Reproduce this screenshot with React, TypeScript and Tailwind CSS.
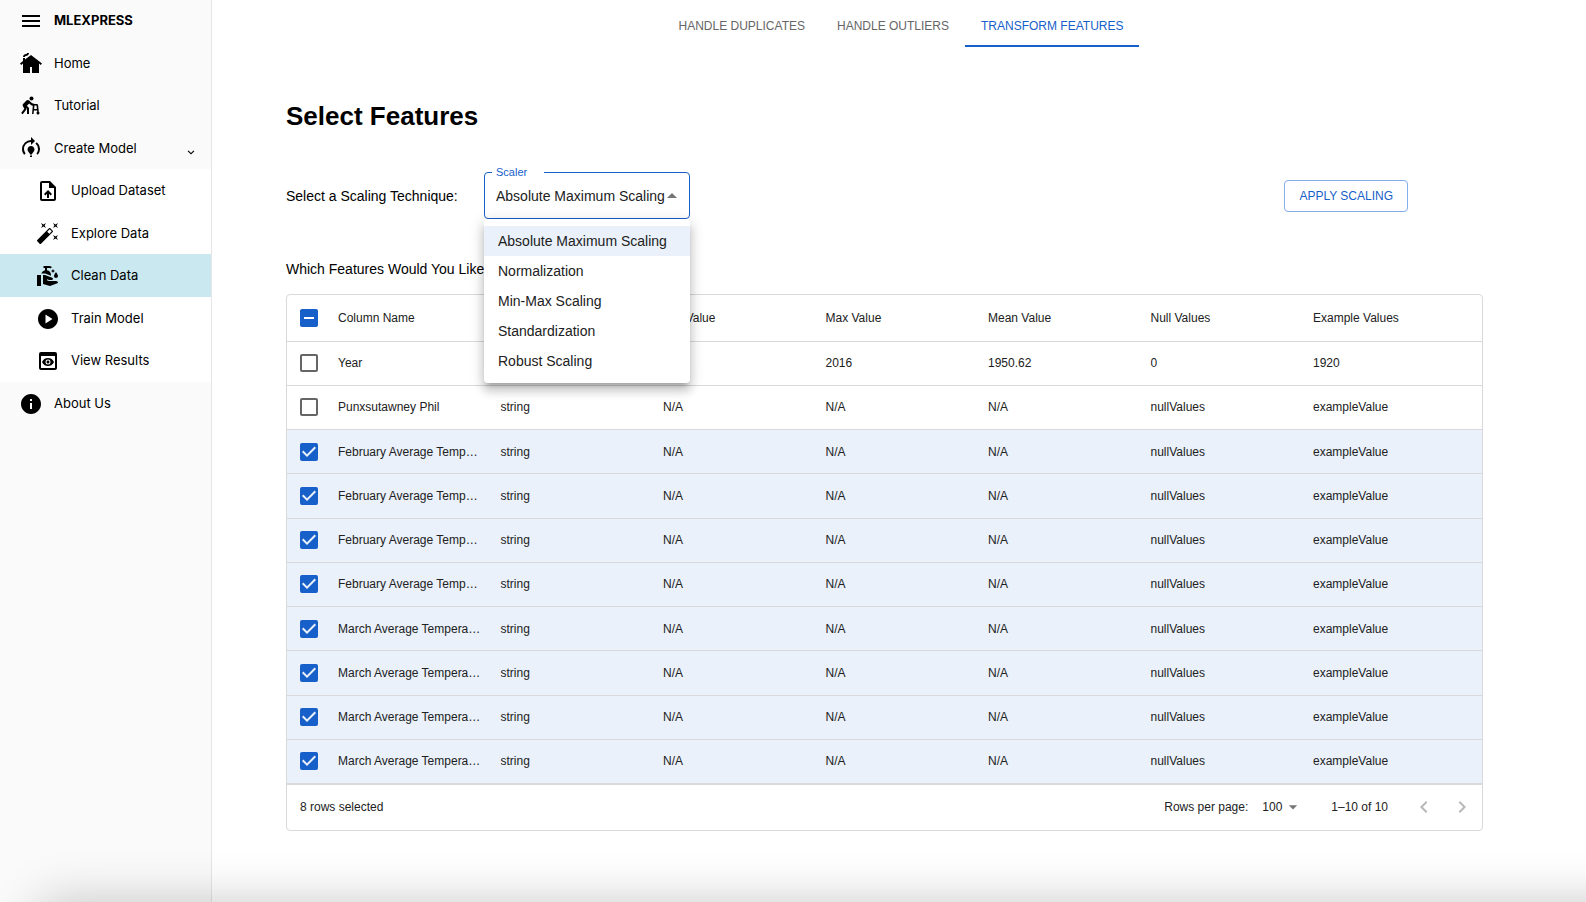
import { useState } from "react";
import type { ReactNode } from "react";
import type { IconType } from "react-icons";
import {
  MdArrowDropDown,
  MdArrowDropUp,
  MdAssistWalker,
  MdAutoFixHigh,
  MdCheckBox,
  MdCheckBoxOutlineBlank,
  MdCleanHands,
  MdCottage,
  MdIndeterminateCheckBox,
  MdInfo,
  MdKeyboardArrowLeft,
  MdKeyboardArrowRight,
  MdMenu,
  MdModelTraining,
  MdPlayCircle,
  MdPreview,
  MdUploadFile,
} from "react-icons/md";
import { BiChevronDown } from "react-icons/bi";

const SCALERS = [
  "Absolute Maximum Scaling",
  "Normalization",
  "Min-Max Scaling",
  "Standardization",
  "Robust Scaling",
];

const TABS = ["HANDLE DUPLICATES", "HANDLE OUTLIERS", "TRANSFORM FEATURES"];

const COLUMNS = [
  "Column Name",
  "Data Type",
  "Min Value",
  "Max Value",
  "Mean Value",
  "Null Values",
  "Example Values",
];

const textRow = (name: string) => [
  name,
  "string",
  "N/A",
  "N/A",
  "N/A",
  "nullValues",
  "exampleValue",
];

const ROWS = [
  ["Year", "int", "1887", "2016", "1950.62", "0", "1920"],
  textRow("Punxsutawney Phil"),
  textRow("February Average Temperature"),
  textRow("February Average Temperature"),
  textRow("February Average Temperature"),
  textRow("February Average Temperature"),
  textRow("March Average Temperature"),
  textRow("March Average Temperature"),
  textRow("March Average Temperature"),
  textRow("March Average Temperature"),
];

function NavItem({
  icon: Icon,
  nested,
  active,
  trailing,
  children,
}: {
  icon: IconType;
  nested?: boolean;
  active?: boolean;
  trailing?: ReactNode;
  children: ReactNode;
}) {
  return (
    <a
      href="#"
      aria-current={active ? "page" : undefined}
      className={`flex items-center gap-[11px] pt-px pr-[13px] ${nested ? "pl-9" : "pl-[19px]"} ${
        active ? "bg-[#c9e8ef]" : ""
      }`}
    >
      <Icon className="size-6 shrink-0" />
      <span className="grow">{children}</span>
      {trailing}
    </a>
  );
}

function Checkbox({
  label,
  checked,
  mixed,
  onChange,
}: {
  label: string;
  checked: boolean;
  mixed?: boolean;
  onChange: () => void;
}) {
  const Icon = mixed ? MdIndeterminateCheckBox : checked ? MdCheckBox : MdCheckBoxOutlineBlank;
  return (
    <label className="grid cursor-pointer justify-center">
      <input
        type="checkbox"
        aria-label={label}
        checked={checked}
        onChange={onChange}
        className="col-start-1 row-start-1 size-6 appearance-none"
      />
      <Icon
        className={`pointer-events-none col-start-1 row-start-1 size-6 ${
          checked || mixed ? "text-[#175fc9]" : "text-[#666666]"
        }`}
      />
    </label>
  );
}

function Sidebar() {
  return (
    <aside className="w-[212px] shrink-0 border-r border-[#e6e6e6] bg-[#fafafa] font-[Inter,sans-serif] text-[13px] text-black">
      <div className="mb-px flex h-[41px] items-center gap-[11px] pl-[19px]">
        <button type="button" aria-label="Toggle menu">
          <MdMenu className="size-6" />
        </button>
        <span className="font-bold">MLEXPRESS</span>
      </div>
      <nav>
        <div className="grid h-[127px] grid-rows-3">
          <NavItem icon={MdCottage}>Home</NavItem>
          <NavItem icon={MdAssistWalker}>Tutorial</NavItem>
          <NavItem icon={MdModelTraining} trailing={<BiChevronDown className="mt-2 size-3.5" />}>
            Create Model
          </NavItem>
        </div>
        <div className="grid h-[213px] grid-rows-5 bg-white">
          <NavItem nested icon={MdUploadFile}>Upload Dataset</NavItem>
          <NavItem nested icon={MdAutoFixHigh}>Explore Data</NavItem>
          <NavItem nested active icon={MdCleanHands}>Clean Data</NavItem>
          <NavItem nested icon={MdPlayCircle}>Train Model</NavItem>
          <NavItem nested icon={MdPreview}>View Results</NavItem>
        </div>
        <div className="grid h-[43px]">
          <NavItem icon={MdInfo}>About Us</NavItem>
        </div>
      </nav>
    </aside>
  );
}

function ScalerField() {
  const [scaler, setScaler] = useState(SCALERS[0]);
  const [open, setOpen] = useState(true);

  return (
    <div className="relative w-[206px]">
      <fieldset className="h-[53px] min-w-0 rounded border border-[#175fc9] pr-[5px] pl-[7px]">
        <legend className="w-[52px] pl-1 text-[11px] leading-3 text-[#175fc9]">
          <label htmlFor="scaler">Scaler</label>
        </legend>
        <div className="grid h-9 items-center">
          <select
            id="scaler"
            value={scaler}
            onMouseDown={(event) => {
              event.preventDefault();
              setOpen(!open);
            }}
            onChange={(event) => setScaler(event.target.value)}
            className="col-start-1 row-start-1 w-full appearance-none bg-transparent pl-1 text-sm text-[#212121] outline-none"
          >
            {SCALERS.map((name) => (
              <option key={name}>{name}</option>
            ))}
          </select>
          <MdArrowDropUp className="pointer-events-none col-start-1 row-start-1 size-6 justify-self-end text-[#757575]" />
        </div>
      </fieldset>
      {open && (
        <ul
          role="listbox"
          aria-label="Scaler"
          className="absolute inset-x-0 top-full z-10 rounded bg-white py-[7px] text-sm text-[#212121] shadow-[0_5px_5px_-3px_rgba(0,0,0,0.2),0_8px_10px_1px_rgba(0,0,0,0.14),0_3px_14px_2px_rgba(0,0,0,0.12)]"
        >
          {SCALERS.map((name) => (
            <li
              key={name}
              role="option"
              aria-selected={name === scaler}
              onClick={() => {
                setScaler(name);
                setOpen(false);
              }}
              className={`flex h-[30px] cursor-pointer items-center px-[14px] ${
                name === scaler ? "bg-[#eaf1fb]" : ""
              }`}
            >
              {name}
            </li>
          ))}
        </ul>
      )}
    </div>
  );
}

function FeatureTable() {
  const [selected, setSelected] = useState<number[]>([2, 3, 4, 5, 6, 7, 8, 9]);
  const all = selected.length === ROWS.length;
  const toggle = (index: number) =>
    setSelected(
      selected.includes(index) ? selected.filter((i) => i !== index) : [...selected, index],
    );

  return (
    <div className="rounded border border-[#d9d9d9] text-xs text-[#212121]">
      <table className="h-[489px] w-full table-fixed border-collapse text-left">
        <colgroup>
          <col className="w-[43px]" />
          {COLUMNS.slice(1).map((name) => (
            <col key={name} />
          ))}
          <col className="w-[177px]" />
        </colgroup>
        <thead>
          <tr className="h-[46px] border-b border-[#d9d9d9]">
            <th>
              <Checkbox
                label="Select all rows"
                checked={all}
                mixed={!all && selected.length > 0}
                onChange={() => setSelected(all ? [] : ROWS.map((_, i) => i))}
              />
            </th>
            {COLUMNS.map((name) => (
              <th key={name} scope="col" className="pr-3 pl-2 font-normal">
                {name}
              </th>
            ))}
          </tr>
        </thead>
        <tbody>
          {ROWS.map((row, index) => {
            const checked = selected.includes(index);
            return (
              <tr
                key={index}
                className={`h-11 border-b border-[#d9d9d9] ${checked ? "bg-[#eaf1fb]" : ""}`}
              >
                <td>
                  <Checkbox
                    label={`Select ${row[0]}`}
                    checked={checked}
                    onChange={() => toggle(index)}
                  />
                </td>
                {row.map((value, column) => (
                  <td key={column} className="truncate pr-3 pl-2">
                    {value}
                  </td>
                ))}
              </tr>
            );
          })}
        </tbody>
      </table>
      <div className="flex h-[46px] items-center border-t border-[#d9d9d9] pr-2 pb-px pl-[13px]">
        <span className="grow">{selected.length} rows selected</span>
        <label htmlFor="page-size">Rows per page:</label>
        <div className="mr-7 ml-3.5 flex items-center">
          <select id="page-size" className="appearance-none bg-transparent outline-none">
            <option>100</option>
          </select>
          <MdArrowDropDown className="pointer-events-none size-5 text-[#757575]" />
        </div>
        <span className="mr-6">1–10 of 10</span>
        <button type="button" aria-label="Previous page" disabled className="mr-3.5 text-[#b8b8b8]">
          <MdKeyboardArrowLeft className="size-6" />
        </button>
        <button type="button" aria-label="Next page" disabled className="text-[#b8b8b8]">
          <MdKeyboardArrowRight className="size-6" />
        </button>
      </div>
    </div>
  );
}

export default function App() {
  const [tab, setTab] = useState(TABS[2]);

  return (
    <div className="flex min-h-screen bg-white font-['Liberation_Sans',Arial,sans-serif] text-black">
      <Sidebar />
      <main className="min-w-0 grow">
        <div role="tablist" className="flex justify-center pl-1">
          {TABS.map((name) => (
            <button
              key={name}
              type="button"
              role="tab"
              aria-selected={name === tab}
              onClick={() => setTab(name)}
              className={`h-[47px] border-b-2 px-4 pt-1.5 text-xs ${
                name === tab
                  ? "border-[#175fc9] text-[#175fc9]"
                  : "border-transparent text-[#666666]"
              }`}
            >
              {name}
            </button>
          ))}
        </div>
        <div className="pr-[103px] pl-[74px]">
          <h1 className="mt-[53px] text-[26px] leading-8 font-bold">Select Features</h1>
          <div className="mt-[34px] flex items-center text-sm">
            <span className="mt-1.5 w-[198px]">Select a Scaling Technique:</span>
            <ScalerField />
            <button
              type="button"
              className="mt-1.5 mr-[75px] ml-auto h-8 rounded border border-[#84adea] px-[14px] text-xs text-[#175fc9]"
            >
              APPLY SCALING
            </button>
          </div>
          <h2 className="mt-10 mb-[15px] text-sm">Which Features Would You Like to Scale?</h2>
          <FeatureTable />
        </div>
      </main>
      <div className="pointer-events-none fixed -right-20 -bottom-20 left-10 h-20 shadow-[0_0_50px_rgba(0,0,0,0.22)]" />
    </div>
  );
}
